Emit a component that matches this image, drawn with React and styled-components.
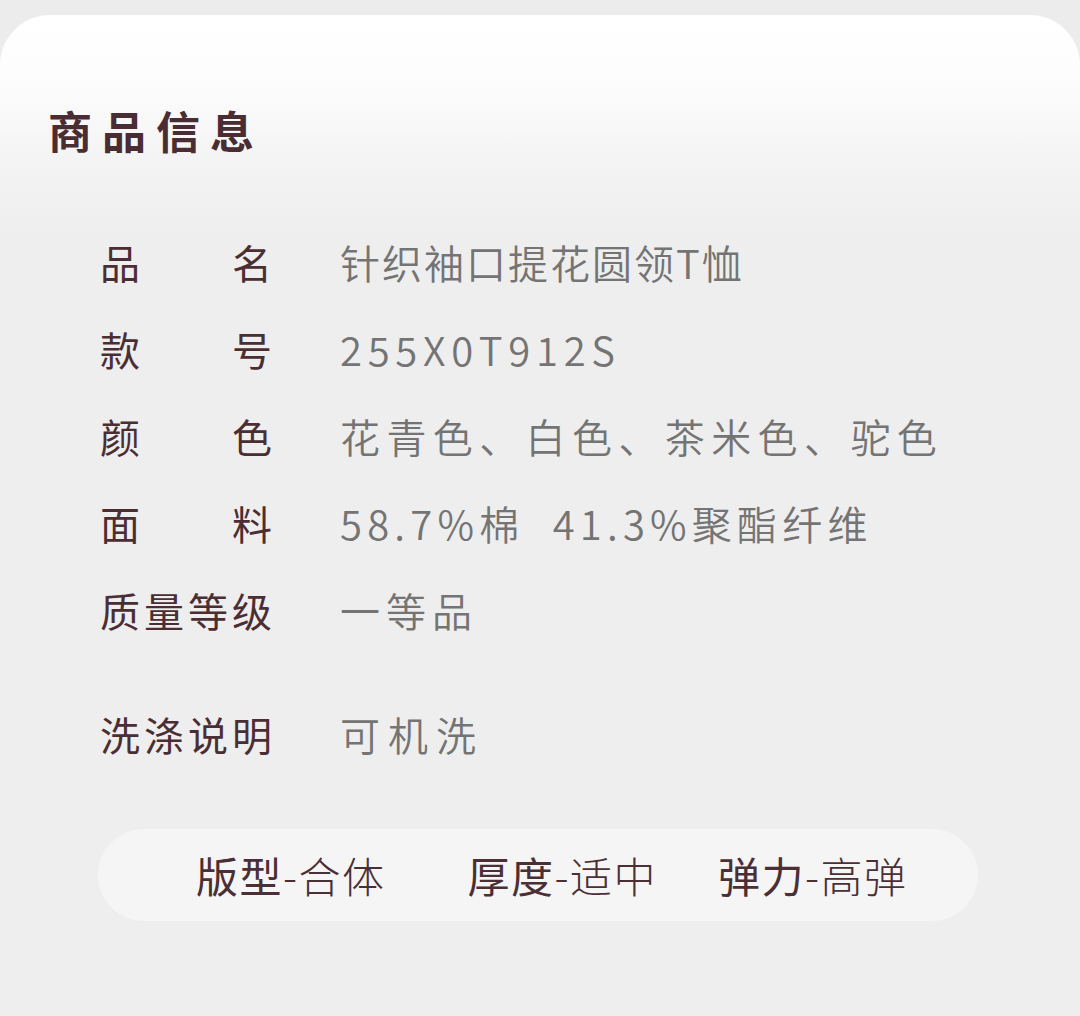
import React from "react";
import styled, { createGlobalStyle } from "styled-components";

const Global = createGlobalStyle`
  html, body { margin: 0; padding: 0; background: #ececec; }
  body { font-family: "Noto Sans CJK SC", "Noto Sans", sans-serif; }
`;

const Page = styled.div`
  width: 1080px;
  min-height: 1016px;
  padding-top: 15px;
  box-sizing: border-box;
`;

const Card = styled.section`
  min-height: 1001px;
  border-radius: 50px 50px 0 0;
  background: linear-gradient(180deg, #ffffff 0px, #fdfdfd 60px, #f3f3f3 150px, #eeeeee 230px, #eeeeee 100%);
  padding: 93px 102px 0 98px;
  box-sizing: border-box;
`;

const Title = styled.h2`
  margin: 0 0 0 -50px;
  font-size: 44px;
  line-height: 44px;
  font-weight: 700;
  letter-spacing: 10px;
  color: #4a2c33;
`;

const List = styled.div`
  display: flex;
  flex-direction: column;
  margin-top: 66px;
  padding-left: 2px;
`;

const Row = styled.div`
  display: flex;
  align-items: center;
  height: 87px;
  margin-top: ${(p) => p.$offset || 0}px;
`;

const Label = styled.div`
  width: 172px;
  flex: none;
  display: flex;
  justify-content: space-between;
  font-size: 40px;
  line-height: 40px;
  color: #4b2e34;
  margin-right: 68px;
`;

const Value = styled.div`
  font-size: 40px;
  line-height: 40px;
  font-weight: 350;
  color: #747474;
  letter-spacing: ${(p) => p.$spacing}px;
  white-space: pre;
`;

const Pill = styled.div`
  margin-top: 52px;
  width: 880px;
  height: 92px;
  border-radius: 46px;
  background: #f5f5f5;
  display: flex;
  align-items: center;
  padding-left: 98px;
  box-sizing: border-box;
`;

const Spec = styled.div`
  display: flex;
  align-items: baseline;
  font-size: 42px;
  line-height: 42px;
  letter-spacing: 1.5px;
  color: #4a2f35;
  margin-left: ${(p) => p.$gap || 0}px;
`;

const SpecName = styled.span`
  font-weight: 400;
`;

const SpecValue = styled.span`
  font-weight: 300;
`;

const rows = [
  { label: ["品", "名"], value: "针织袖口提花圆领T恤", spacing: 2 },
  { label: ["款", "号"], value: "255X0T912S", spacing: 5.7 },
  { label: ["颜", "色"], value: "花青色、白色、茶米色、驼色", spacing: 6.4 },
  { label: ["面", "料"], value: "58.7%棉  41.3%聚酯纤维", spacing: 5.2 },
  { label: ["质", "量", "等", "级"], value: "一等品", spacing: 6 },
  { label: ["洗", "涤", "说", "明"], value: "可机洗", spacing: 8, offset: 37 },
];

const specs = [
  { name: "版型", value: "-合体", gap: 0 },
  { name: "厚度", value: "-适中", gap: 82 },
  { name: "弹力", value: "-高弹", gap: 61 },
];

export default function App() {
  return (
    <Page>
      <Global />
      <Card>
        <Title>商品信息</Title>
        <List>
          {rows.map((r) => (
            <Row key={r.label.join("")} $offset={r.offset}>
              <Label>
                {r.label.map((c, i) => (
                  <span key={i}>{c}</span>
                ))}
              </Label>
              <Value $spacing={r.spacing}>{r.value}</Value>
            </Row>
          ))}
        </List>
        <Pill>
          {specs.map((s) => (
            <Spec key={s.name} $gap={s.gap}>
              <SpecName>{s.name}</SpecName>
              <SpecValue>{s.value}</SpecValue>
            </Spec>
          ))}
        </Pill>
      </Card>
    </Page>
  );
}
